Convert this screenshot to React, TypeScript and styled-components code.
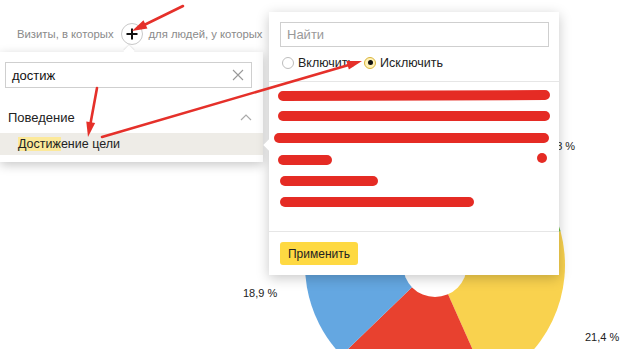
import styled, { createGlobalStyle } from 'styled-components';

const GlobalStyle = createGlobalStyle`
  html, body {
    margin: 0;
    padding: 0;
    background: #fff;
  }
  body {
    font-family: "Liberation Sans", Arial, "Noto Sans", sans-serif;
    color: #222;
  }
`;

const CX = 435;
const CY = 265;
const R = 130;

function polar(angle: number, r: number) {
  const a = (angle * Math.PI) / 180;
  return [CX + r * Math.cos(a), CY + r * Math.sin(a)];
}

function slicePath(from: number, to: number) {
  const [x1, y1] = polar(from, R);
  const [x2, y2] = polar(to, R);
  const large = to - from > 180 ? 1 : 0;
  return `M${CX} ${CY} L${x1} ${y1} A${R} ${R} 0 ${large} 1 ${x2} ${y2} Z`;
}

const slices = [
  { from: -15, to: 66, color: '#f9d24e' },
  { from: 66, to: 136, color: '#e8412f' },
  { from: 136, to: 204, color: '#64a7e1' },
  { from: 204, to: 300, color: '#9c6fcf' },
  { from: 300, to: 345, color: '#6cbf45' },
];

const strokes = [
  { x1: 283, y1: 96, x2: 545, y2: 95 },
  { x1: 283, y1: 116, x2: 545, y2: 116 },
  { x1: 279, y1: 138, x2: 544, y2: 138 },
  { x1: 283, y1: 160, x2: 327, y2: 160 },
  { x1: 285, y1: 181, x2: 373, y2: 181 },
  { x1: 285, y1: 202, x2: 469, y2: 202 },
];

function Arrow({ x1, y1, x2, y2 }: { x1: number; y1: number; x2: number; y2: number }) {
  const dx = x2 - x1;
  const dy = y2 - y1;
  const len = Math.hypot(dx, dy);
  const ux = dx / len;
  const uy = dy / len;
  const head = 15;
  const half = 4.5;
  const bx = x2 - ux * head;
  const by = y2 - uy * head;
  const points = `${x2},${y2} ${bx - uy * half},${by + ux * half} ${bx + uy * half},${by - ux * half}`;
  return (
    <g>
      <line x1={x1} y1={y1} x2={bx + ux * 2} y2={by + uy * 2} stroke="#e5302a" strokeWidth={2.6} strokeLinecap="round" />
      <polygon points={points} fill="#e5302a" />
    </g>
  );
}

function App() {
  return (
    <>
      <GlobalStyle />
      <Page>
        <FilterBar>
          <FilterLabel>Визиты, в которых</FilterLabel>
          <PlusButton>
            <svg width="12" height="12" viewBox="0 0 12 12">
              <path d="M6 0.5V11.5M0.5 6H11.5" stroke="#111" strokeWidth="2" />
            </svg>
          </PlusButton>
          <FilterLabel>для людей, у которых</FilterLabel>
          <PlusButton />
        </FilterBar>

        <Chart viewBox="0 68 629 281" width="629" height="281">
          {slices.map((s) => (
            <path key={s.from} d={slicePath(s.from, s.to)} fill={s.color} />
          ))}
          <circle cx={CX} cy={CY} r={32} fill="#fff" />
          <ChartLabel x={243} y={297}>18,9 %</ChartLabel>
          <ChartLabel x={547} y={150}>1,8 %</ChartLabel>
          <ChartLabel x={585} y={341}>21,4 %</ChartLabel>
        </Chart>

        <SearchPopup>
          <SearchBox>
            <SearchText>достиж</SearchText>
            <svg width="12" height="12" viewBox="0 0 12 12">
              <path d="M1 1L11 11M11 1L1 11" stroke="#999" strokeWidth="1.1" />
            </svg>
          </SearchBox>
          <GroupHeader>
            <span>Поведение</span>
            <svg width="12" height="8" viewBox="0 0 12 8">
              <path d="M1 7L6 2L11 7" stroke="#aaa" strokeWidth="1.2" fill="none" />
            </svg>
          </GroupHeader>
          <GroupItem>
            <Match>Достиж</Match>ение цели
          </GroupItem>
        </SearchPopup>

        <ValuesPanel>
          <PanelInput>Найти</PanelInput>
          <RadioRow>
            <RadioOption>
              <Radio />
              Включить
            </RadioOption>
            <RadioOption>
              <Radio $checked />
              Исключить
            </RadioOption>
          </RadioRow>
          <ValuesList>
            <CheckMark>✓</CheckMark>
          </ValuesList>
          <PanelFooter>
            <ApplyButton>Применить</ApplyButton>
          </PanelFooter>
        </ValuesPanel>

        <Annotations width="629" height="349" viewBox="0 0 629 349">
          {strokes.map((s) => (
            <line key={s.y1} {...s} stroke="#e52b24" strokeWidth={10} strokeLinecap="round" />
          ))}
          <circle cx={542} cy={158} r={5} fill="#e52b24" />
          <Arrow x1={183} y1={6} x2={132} y2={31} />
          <Arrow x1={97} y1={88} x2={88} y2={137} />
          <Arrow x1={102} y1={137} x2={362} y2={61} />
        </Annotations>
      </Page>
    </>
  );
}

const Page = styled.div`
  position: relative;
  width: 629px;
  height: 349px;
  overflow: hidden;
  background: #fff;
`;

const FilterBar = styled.div`
  display: flex;
  align-items: center;
  gap: 6px;
  height: 68px;
  padding-left: 17px;
  box-sizing: border-box;
`;

const FilterLabel = styled.span`
  font-size: 11.3px;
  color: #8a8a8a;
  margin-right: 1px;
`;

const PlusButton = styled.div`
  width: 22px;
  height: 22px;
  box-sizing: border-box;
  border: 1px solid #c9c9c9;
  border-radius: 50%;
  display: flex;
  align-items: center;
  justify-content: center;
  background: #fff;
`;

const Chart = styled.svg`
  display: block;
`;

const ChartLabel = styled.text`
  font-family: "Liberation Sans", Arial, sans-serif;
  font-size: 11px;
  fill: #222;
`;

const SearchPopup = styled.div`
  position: absolute;
  left: 0;
  top: 52px;
  width: 263px;
  height: 110px;
  background: #fff;
  box-shadow: 0 3px 10px rgba(0, 0, 0, 0.22);
  padding-top: 10px;
  box-sizing: border-box;

  &::before {
    content: '';
    position: absolute;
    left: 125px;
    top: -5px;
    width: 8px;
    height: 8px;
    background: #fff;
    transform: rotate(45deg);
    box-shadow: -1px -1px 1px rgba(0, 0, 0, 0.08);
  }
`;

const SearchBox = styled.div`
  margin: 0 11px 0 5px;
  height: 24px;
  border: 1px solid #cfcfcf;
  display: flex;
  align-items: center;
  justify-content: space-between;
  padding: 0 7px 0 6px;
`;

const SearchText = styled.span`
  font-size: 13px;
  color: #111;
`;

const GroupHeader = styled.div`
  display: flex;
  align-items: center;
  justify-content: space-between;
  height: 22px;
  margin-top: 18px;
  padding: 0 11px 0 8px;
  font-size: 13px;
  color: #222;
`;

const GroupItem = styled.div`
  height: 22px;
  margin-top: 5px;
  display: flex;
  align-items: center;
  padding-left: 18px;
  background: #eeece7;
  font-size: 12.5px;
  color: #222;
`;

const Match = styled.span`
  background: #fce99a;
`;

const ValuesPanel = styled.div`
  position: absolute;
  left: 269px;
  top: 12px;
  width: 290px;
  height: 263px;
  background: #fff;
  box-shadow: 0 3px 12px rgba(0, 0, 0, 0.22);
  display: flex;
  flex-direction: column;

  &::before {
    content: '';
    position: absolute;
    left: -4px;
    top: 129px;
    width: 8px;
    height: 8px;
    background: #fff;
    transform: rotate(45deg);
  }
`;

const PanelInput = styled.div`
  margin: 10px 10px 0 11px;
  height: 23px;
  border: 1px solid #cfcfcf;
  display: flex;
  align-items: center;
  padding-left: 6px;
  font-size: 13px;
  color: #999;
`;

const RadioRow = styled.div`
  display: flex;
  align-items: center;
  gap: 10px;
  height: 31px;
  padding: 0 0 3px 13px;
  border-bottom: 1px solid #e6e6e6;
`;

const RadioOption = styled.label`
  display: flex;
  align-items: center;
  gap: 4px;
  font-size: 12.5px;
  color: #222;
`;

const Radio = styled.span<{ $checked?: boolean }>`
  width: 12px;
  height: 12px;
  box-sizing: border-box;
  border-radius: 50%;
  border: 1px solid ${(p) => (p.$checked ? '#d9b43c' : '#bdbdbd')};
  background: ${(p) => (p.$checked ? '#fff2b8' : '#fff')};
  display: flex;
  align-items: center;
  justify-content: center;

  &::after {
    content: '';
    display: ${(p) => (p.$checked ? 'block' : 'none')};
    width: 5px;
    height: 5px;
    border-radius: 50%;
    background: #111;
  }
`;

const ValuesList = styled.div`
  flex: 1;
  padding: 2px 0 0 20px;
`;

const CheckMark = styled.span`
  font-size: 10px;
  color: #222;
`;

const PanelFooter = styled.div`
  height: 43px;
  border-top: 1px solid #e6e6e6;
  display: flex;
  align-items: center;
  padding-left: 11px;
`;

const ApplyButton = styled.button`
  height: 23px;
  width: 78px;
  border: none;
  border-radius: 3px;
  background: #fed942;
  font-family: inherit;
  font-size: 12px;
  color: #222;
  padding: 0;
`;

const Annotations = styled.svg`
  position: absolute;
  left: 0;
  top: 0;
  pointer-events: none;
`;

export default App;
